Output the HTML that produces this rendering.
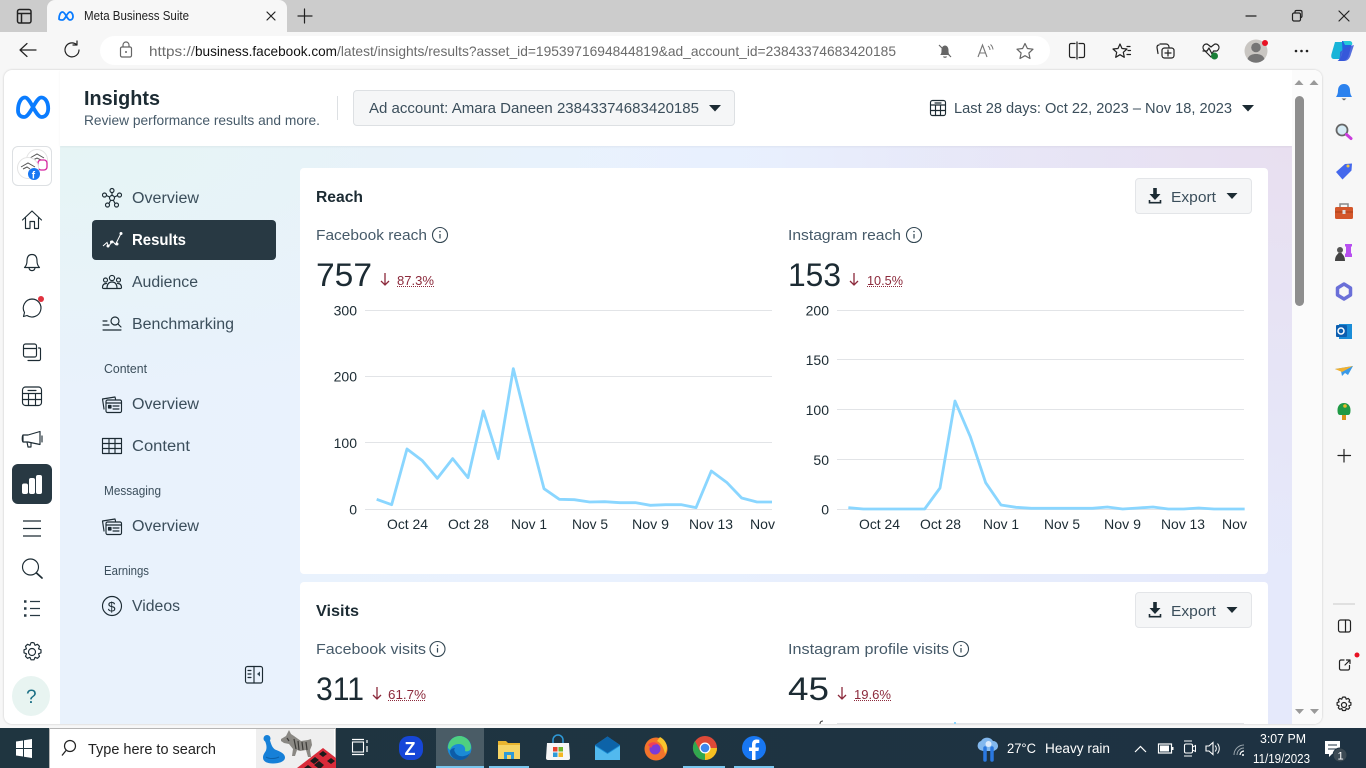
<!DOCTYPE html>
<html lang="en"><head><meta charset="utf-8"><title>Meta Business Suite</title>
<style>
html,body{margin:0;padding:0;width:1366px;height:768px;overflow:hidden;background:#f7f7f7;font-family:"Liberation Sans",sans-serif}
.a{position:absolute}
svg{position:absolute;left:0;top:0}
text{font-family:"Liberation Sans",sans-serif}
.n{font-size:15.5px;fill:#3b4e5b}
.s{font-size:12.5px;fill:#3b4e5b}
.ax{font-size:14px;fill:#1c2b33}
.bg{font-size:32px;fill:#1c2b33}
.pc{font-size:13px;fill:#8c2a3c}
.m{font-size:15px;fill:#465a69}
.h{font-size:15.5px;font-weight:bold;fill:#1c2b33}
.ic{fill:none;stroke:#1c2b33;stroke-width:1.15;stroke-linecap:round;stroke-linejoin:round}
.ib{fill:none;stroke:#222;stroke-width:1.2;stroke-linecap:round;stroke-linejoin:round}
.gr{stroke:#e2e4e7;stroke-width:1}
.ln{fill:none;stroke:#8ad6ff;stroke-linejoin:round}
.dot{stroke:#8c2a3c;stroke-width:1;stroke-dasharray:1 1}
.ar{fill:none;stroke:#8c2a3c;stroke-width:1.3}
</style></head><body>
<div class="a" style="left:0;top:0;width:1366px;height:32px;background:#ccc"></div>
<div class="a" style="left:47px;top:0;width:240px;height:32px;background:#f7f7f7;border-radius:8px 8px 0 0"></div>
<div class="a" style="left:100px;top:36px;width:950px;height:29px;background:#fff;border-radius:15px"></div>
<div class="a" style="left:4px;top:70px;width:1318px;height:654px;background:#fff;border-radius:8px;box-shadow:0 0 2px rgba(0,0,0,.2);overflow:hidden">
  <div class="a" style="left:56px;top:76px;width:1232px;height:578px;background:radial-gradient(ellipse 520px 420px at 100% 0,#e8dff0 0%,rgba(232,223,240,0) 100%),radial-gradient(ellipse 620px 260px at 0 0,#e6f4f5 0%,rgba(230,244,245,0) 100%),linear-gradient(90deg,#e9f2fc 0%,#e9f1fe 45%,#e5e9fb 100%)"></div>
  <div class="a" style="left:56px;top:0;width:1232px;height:76px;background:#fff;box-shadow:0 1px 2px rgba(0,0,0,.05)"></div>
  <div class="a" style="left:1288px;top:0;width:30px;height:654px;background:#fbfbfb"></div>
  <div class="a" style="left:1291px;top:26px;width:9px;height:210px;background:#8e8e8e;border-radius:5px"></div>
  <div class="a" style="left:296px;top:98px;width:968px;height:406px;background:#fff;border-radius:4px"></div>
  <div class="a" style="left:296px;top:512px;width:968px;height:150px;background:#fff;border-radius:4px"></div>
  <div class="a" style="left:88px;top:150px;width:184px;height:40px;background:#283943;border-radius:4px"></div>
  <div class="a" style="left:349px;top:20px;width:380px;height:34px;background:#f5f6f7;border:1px solid #dde0e3;border-radius:4px"></div>
  <div class="a" style="left:1131px;top:108px;width:115px;height:34px;background:#f5f6f7;border:1px solid #e3e5e8;border-radius:4px"></div>
  <div class="a" style="left:1131px;top:522px;width:115px;height:34px;background:#f5f6f7;border:1px solid #e3e5e8;border-radius:4px"></div>
  <div class="a" style="left:8px;top:394px;width:40px;height:40px;background:#283943;border-radius:6px"></div>
  <div class="a" style="left:8px;top:76px;width:38px;height:38px;background:#fff;border:1px solid #dde0e3;border-radius:6px"></div>
  <div class="a" style="left:8px;top:606px;width:38px;height:40px;background:#e8f4f1;border-radius:50%"></div>
</div>
<div class="a" style="left:0;top:728px;width:1366px;height:40px;background:linear-gradient(90deg,#1f3540,#1e3242)"></div>
<div class="a" style="left:49px;top:728px;height:40px;background:#fff;border:1px solid #b5b5b5;border-bottom:0;box-sizing:border-box;width:287px"></div>
<div class="a" style="left:256px;top:729px;width:78px;height:39px;background:#efefef"></div>
<div class="a" style="left:436px;top:728px;width:48px;height:40px;background:#4a5c66"></div>
<svg width="1366" height="768" viewBox="0 0 1366 768">
<!-- tab strip -->
<rect x="17.500" y="9.500" width="13.500" height="13.500" rx="2" fill="none" stroke="#222" stroke-width="1.500"/><path d="M18 13.500h13M21.500 13.500v9" fill="none" stroke="#222" stroke-width="1.500"/>
<path d="M59 19c0-4 1.500-7 3.500-7 3 0 4.500 8 7.500 8 2 0 3-1.500 3-3.500 0-2.500-1.500-4.500-3-4.500-3 0-4.500 8-7.500 8-2.300 0-3.500-.5-3.500-1z" fill="none" stroke="#0a7cff" stroke-width="1.800"/>
<text x="84" y="20" font-size="12.500" fill="#222" textLength="105" lengthAdjust="spacingAndGlyphs">Meta Business Suite</text>
<path d="M267 12l8 8M275 12l-8 8" class="ib"/>
<path d="M304.500 9v14M298 16h14" class="ib"/>
<path d="M1246 16h10" class="ib"/>
<rect x="1292.500" y="13" width="8" height="8" rx="1.500" class="ib"/><path d="M1295 13v-1c0-1 .5-1.500 1.500-1.500h4c1 0 1.500.5 1.500 1.500v4c0 1-.5 1.500-1.500 1.500" class="ib"/>
<path d="M1339 11l10 10M1349 11l-10 10" class="ib"/>
<!-- toolbar -->
<path d="M20 50h16M27 43.500L20 50l7 6.500" class="ib"/>
<path d="M79 50a7 7 0 1 1-2.500-5.500M77 41v4h-4" class="ib"/>
<rect x="120.500" y="47" width="11" height="10" rx="1.500" fill="none" stroke="#666" stroke-width="1.200"/><path d="M123 47v-2a3 3 0 0 1 6 0v2" fill="none" stroke="#666" stroke-width="1.200"/><circle cx="126" cy="52" r="1" fill="#666"/>
<text x="149" y="56" font-size="14" fill="#6b6b6b" textLength="46" lengthAdjust="spacingAndGlyphs">https://</text>
<text x="195" y="56" font-size="14" fill="#111" textLength="142" lengthAdjust="spacingAndGlyphs">business.facebook.com</text>
<text x="337" y="56" font-size="14" fill="#6b6b6b" textLength="559" lengthAdjust="spacingAndGlyphs">/latest/insights/results?asset_id=1953971694844819&amp;ad_account_id=23843374683420185</text>
<path d="M940 55c1.500-1 1.500-3 1.500-5 0-2.500 1.500-4.500 3.500-4.500s3.500 2 3.500 4.500c0 2 0 4 1.500 5z" fill="#666"/><path d="M943.500 56.500a1.800 1.800 0 0 0 3 0M939 45l12 12" stroke="#666" stroke-width="1.200" fill="none"/>
<path d="M978 57l4.500-12 4.500 12M979.500 53h6" fill="none" stroke="#777" stroke-width="1.100"/><path d="M988 46a5 5 0 0 1 2 4M990.500 44.500a8 8 0 0 1 2.500 5" fill="none" stroke="#777" stroke-width="1"/>
<path d="M1025 43.500l2.400 5 5.600.7-4.100 3.800 1.100 5.500-5-2.800-5 2.800 1.100-5.500-4.100-3.800 5.600-.7z" fill="none" stroke="#666" stroke-width="1.200" stroke-linejoin="round"/>
<path d="M1075 44h-4a1.500 1.500 0 0 0-1.500 1.500v11a1.500 1.500 0 0 0 1.500 1.500h4M1079 44h4a1.500 1.500 0 0 1 1.500 1.500v11a1.500 1.500 0 0 1-1.500 1.500h-4M1077 42.500v17" class="ib" transform="translate(0 -.5)"/>
<path d="M1120 44l2 4.500 5 .5-3.700 3.300 1 5-4.300-2.600-4.300 2.600 1-5L1113 49l5-.5zM1127 46.500h3M1128 50.500h2.500M1127 54.500h3.500" class="ib"/>
<path d="M1160 44h6a3 3 0 0 1 3 3M1159 45c-1.500 0-2 1-2 2.500l1 6" class="ib"/><rect x="1162" y="48" width="12" height="10" rx="2.500" class="ib"/><path d="M1168 50v6M1165 53h6" class="ib"/>
<path d="M1211 57l-7-7c-3-3.500 1.500-8 4.500-5l2.500 2 2.500-2c3-3 7.500 1.500 4.500 5l-1 1" class="ib"/><path d="M1203 51h4l2-3 3 6 1.500-3h3" class="ib"/><circle cx="1214.500" cy="56" r="3.500" fill="#1a7f37"/>
<circle cx="1256" cy="51" r="11.500" fill="#c9c6c2"/><circle cx="1256" cy="47.500" r="4.800" fill="#757575"/><path d="M1247.500 59c1.500-4 5-5 8.500-5s7 1 8.500 5a11.500 11.500 0 0 1-17 0z" fill="#757575"/><circle cx="1265" cy="43" r="3" fill="#e81123"/>
<circle cx="1296" cy="51" r="1.300" fill="#222"/><circle cx="1301.500" cy="51" r="1.300" fill="#222"/><circle cx="1307" cy="51" r="1.300" fill="#222"/>
<path d="M1335 42h10l-5 17h-6c-3 0-3-3-2.500-5z" fill="#18b4d8"/><path d="M1342 41h7c3 0 3 2 2.500 4l-3 11c-1 3-3 5-6 5h-5c3-2 4-5 5-9z" fill="#2463e0"/><path d="M1340 52l7-5 7-2-3 9c-1 4-3 7-7 7h-6c2-2 2-5 2-9z" fill="#3a56d8" opacity=".85"/><path d="M1343 41h6c2 0 4 1 3 4h-7z" fill="#26c9d9"/>
<!-- header -->
<path d="M18 110.500c0-7.500 3-13 7-13 5.500 0 10.500 19.500 16.500 19.500 3.800 0 6.700-3 6.700-8.500 0-6.500-3-11-7-11-5.500 0-11 19.500-17 19.500-3.700 0-6.200-2.500-6.200-6.500z" fill="none" stroke="#0a7cff" stroke-width="3.800"/>
<text x="84" y="105" font-size="20" font-weight="bold" fill="#1c2b33" textLength="76" lengthAdjust="spacingAndGlyphs">Insights</text>
<text x="84" y="125" font-size="14" fill="#465a69" textLength="236" lengthAdjust="spacingAndGlyphs">Review performance results and more.</text>
<path d="M337.500 96v24" stroke="#dde0e3"/>
<text x="369" y="113" font-size="15" fill="#3b4e5b" textLength="330" lengthAdjust="spacingAndGlyphs">Ad account: Amara Daneen 23843374683420185</text>
<path d="M709 105h12l-6 6.500z" fill="#1c2b33"/>
<rect x="930.500" y="100.500" width="15" height="15" rx="2" class="ic"/><path d="M930.500 105h15M930.500 110.500h15M935.500 105v10.500M940.500 105v10.500M935 103h6" class="ic"/>
<text x="954" y="113" font-size="15" fill="#3b4e5b" textLength="278" lengthAdjust="spacingAndGlyphs">Last 28 days: Oct 22, 2023 – Nov 18, 2023</text>
<path d="M1242 105h12l-6 6.500z" fill="#1c2b33"/>
<!-- scroll arrows -->
<path d="M1294.500 85l4.500-5 4.500 5zM1309.500 85l4.500-5 4.500 5z" fill="#9a9a9a"/>
<path d="M1295 709l4.500 5 4.500-5zM1310 709l4.500 5 4.500-5z" fill="#9a9a9a"/>
<!-- left rail -->
<circle cx="37" cy="160" r="10.500" fill="#fff" stroke="#e4e4e4"/><path d="M30 158l7-4 7 4M33 160l4-2 4 2" fill="none" stroke="#555" stroke-width="1"/>
<rect x="38" y="160" width="9" height="10" rx="3" fill="#fff" stroke="#d6249f" stroke-width="1.300"/>
<circle cx="28" cy="168" r="10.500" fill="#fff" stroke="#e4e4e4"/><path d="M21 167l7-4 7 4M23 169l4-2 3 2" fill="none" stroke="#555" stroke-width="1"/>
<circle cx="34" cy="174" r="6" fill="#1877f2"/><text x="31.800" y="178.500" font-size="10" font-weight="bold" fill="#fff">f</text>
<path d="M22.500 220l9.500-9 9.500 9M25.500 218v10.500h4.500v-7h4.500v7H38.500V218" class="ic"/>
<path d="M32 254.500c-3.700 0-5 3-5 6.500 0 3-1 5-2.500 6.500h15c-1.500-1.500-2.500-3.500-2.500-6.500 0-3.500-1.300-6.500-5-6.500zM29 268c.7 3.500 5.300 3.500 6 0" class="ic"/>
<path d="M32 299a9 9 0 1 1-5 16.500l-3.500 1 1-4A9 9 0 0 1 32 299z" class="ic"/><circle cx="41" cy="299" r="3" fill="#e0323f"/>
<rect x="23.500" y="344" width="13" height="13" rx="2" class="ic"/><path d="M23.500 348.500h13" class="ic"/><path d="M38.500 348h1a1 1 0 0 1 1 1v10a1.500 1.500 0 0 1-1.500 1.500H28" class="ic"/>
<rect x="22.500" y="387" width="19" height="18.500" rx="3" class="ic"/><path d="M22.500 393.500h19M22.500 399.500h19M28.500 393.500v12M35.500 393.500v12M28 390.500h8" class="ic"/>
<path d="M23 435h5l12-3.500v13L28 442h-5zM23 435c-1 1-1 6 0 7M27 442l1 5h3v-4M42 436v6" class="ic"/>
<rect x="22" y="483.500" width="6" height="10.500" rx="2" fill="#fff"/><rect x="29" y="478" width="6" height="16" rx="2" fill="#fff"/><rect x="36" y="475" width="6" height="19" rx="2" fill="#fff"/>
<path d="M23 521h18M23 528.500h18M23 536h18" stroke="#1c2b33" stroke-width="1.200"/>
<circle cx="30.500" cy="567" r="8" class="ic"/><path d="M36.500 573l5.500 5" stroke="#1c2b33" stroke-width="1.700" stroke-linecap="round"/>
<path d="M24 601.500h2.500M24 608.500h2.500M24 615.500h2.500" stroke="#283943" stroke-width="2.600"/><path d="M30 601.500h10M30 608.500h10M30 615.500h10" stroke="#283943" stroke-width="1.200"/>
<path d="M32 642.500l2 .3 1 2.500 2.500-1 2 2-1 2.500 2.500 1v3l-2.500 1 1 2.500-2 2-2.500-1-1 2.500h-3l-1-2.500-2.500 1-2-2 1-2.500-2.500-1v-3l2.500-1-1-2.500 2-2 2.500 1 1-2.500z" class="ic"/><circle cx="32" cy="652" r="3.500" class="ic"/>
<text x="26" y="703" font-size="19" fill="#1b6f85">?</text>
<!-- nav -->
<g class="ic"><circle cx="112" cy="198" r="2.500"/><circle cx="112" cy="190.500" r="2"/><circle cx="104.500" cy="195" r="2"/><circle cx="119.500" cy="195" r="2"/><circle cx="107.500" cy="205" r="2"/><circle cx="116.500" cy="205" r="2"/><path d="M112 192.500v3M106.500 195.500l3 1.500M117.500 195.500l-3 1.500M109 203.500l1.500-3M115 203.500l-1.500-3"/></g>
<text x="132" y="203" class="n" textLength="67" lengthAdjust="spacingAndGlyphs">Overview</text>
<path d="M103 246l4-3.500 1.500 4 4-5.500 3 3.500 3-6 2.500-5" fill="none" stroke="#fff" stroke-width="1"/><g fill="#fff"><circle cx="108" cy="246" r="1.500"/><circle cx="111.500" cy="242" r="1.500"/><circle cx="117" cy="244" r="1.500"/><circle cx="121" cy="233.500" r="1.500"/></g>
<text x="132" y="245" font-size="15.500" font-weight="bold" fill="#fff" textLength="54" lengthAdjust="spacingAndGlyphs">Results</text>
<g class="ic"><circle cx="112" cy="278" r="2.600"/><circle cx="105.500" cy="280" r="2"/><circle cx="118.500" cy="280" r="2"/><path d="M107 288.500c0-5 2-6.500 5-6.500s5 1.500 5 6.500zM106.500 283.500c-2.500 0-4 1.500-4 4 0 1 .5 1 1.500 1h3M117.500 283.500c2.500 0 4 1.500 4 4 0 1-.5 1-1.500 1h-3"/></g>
<text x="132" y="287" class="n" textLength="66" lengthAdjust="spacingAndGlyphs">Audience</text>
<g class="ic"><circle cx="115" cy="321" r="4"/><path d="M118 324l3 3M103 321h4M103 325h6M103 330h18"/></g>
<text x="132" y="329" class="n" textLength="102" lengthAdjust="spacingAndGlyphs">Benchmarking</text>
<text x="104" y="373" class="s" textLength="43" lengthAdjust="spacingAndGlyphs">Content</text>
<g id="ci" class="ic"><path d="M104 409l-1.500-10 12.500-2 .5 2"/><rect x="106" y="400" width="15.500" height="12.500" rx="1.500"/><path d="M106 403h15.500M113 406h6M113 409h6"/><rect x="108.500" y="405.500" width="2.500" height="2.500" fill="#1c2b33"/></g>
<text x="132" y="409" class="n" textLength="67" lengthAdjust="spacingAndGlyphs">Overview</text>
<path d="M102.500 438.500h19v15h-19zM102.500 443.500h19M102.500 448.500h19M109 438.500v15M115 438.500v15" class="ic"/>
<text x="132" y="451" class="n" textLength="58" lengthAdjust="spacingAndGlyphs">Content</text>
<text x="104" y="495" class="s" textLength="57" lengthAdjust="spacingAndGlyphs">Messaging</text>
<use href="#ci" transform="translate(0 122)"/>
<text x="132" y="531" class="n" textLength="67" lengthAdjust="spacingAndGlyphs">Overview</text>
<text x="104" y="575" class="s" textLength="45" lengthAdjust="spacingAndGlyphs">Earnings</text>
<circle cx="112" cy="606" r="9.500" class="ic"/><text x="107.800" y="611.500" font-size="14" fill="#1c2b33">$</text>
<text x="132" y="611" class="n" textLength="48" lengthAdjust="spacingAndGlyphs">Videos</text>
<rect x="245.500" y="666.500" width="17" height="16.500" rx="2" class="ic"/><path d="M254 666.500V683M248 670.500h3M248 674h3M248 677.500h3" class="ic"/><path d="M260 671.500v5l-3-2.500z" fill="#344854"/>
<!-- Reach card -->
<text x="316" y="202" class="h" textLength="47" lengthAdjust="spacingAndGlyphs">Reach</text>
<text x="316" y="240" class="m" textLength="111" lengthAdjust="spacingAndGlyphs">Facebook reach</text>
<g id="inf"><circle cx="440" cy="235" r="7.500" fill="none" stroke="#344854" stroke-width="1.100"/><path d="M440 234v4.500" stroke="#344854" stroke-width="1.200"/><circle cx="440" cy="231.500" r=".8" fill="#344854"/></g>
<text x="316" y="286" class="bg" textLength="56" lengthAdjust="spacingAndGlyphs">757</text>
<path d="M385 273v12M381 281l4 4 4-4" class="ar"/>
<text x="397" y="285" class="pc" textLength="37" lengthAdjust="spacingAndGlyphs">87.3%</text><path d="M397 286.500h37" class="dot"/>
<text x="788" y="240" class="m" textLength="113" lengthAdjust="spacingAndGlyphs">Instagram reach</text>
<use href="#inf" x="474"/>
<text x="788" y="286" class="bg" textLength="53" lengthAdjust="spacingAndGlyphs">153</text>
<path d="M854 273v12M850 281l4 4 4-4" class="ar"/>
<text x="867" y="285" class="pc" textLength="36" lengthAdjust="spacingAndGlyphs">10.5%</text><path d="M867 286.500h36" class="dot"/>
<g id="exp"><path d="M1153.200 188h3.600v6h3.700l-5.500 6-5.500-6h3.700z" fill="#1c2b33"/><path d="M1149.500 200v2.700h11V200" fill="none" stroke="#1c2b33" stroke-width="1.600"/>
<text x="1171" y="202" font-size="15" fill="#3b4e5b" textLength="45" lengthAdjust="spacingAndGlyphs">Export</text>
<path d="M1226.500 193h11l-5.500 6z" fill="#1c2b33"/></g>
<path d="M365 310.500h407M365 376.500h407M365 442.500h407" class="gr"/><path d="M365 509.500h407" class="gr" stroke-width="1.500"/>
<g class="ax" text-anchor="end"><text x="357" y="315.500">300</text><text x="357" y="381.500">200</text><text x="357" y="448">100</text><text x="357" y="514.500">0</text></g>
<polyline class="ln" transform="translate(300 170) scale(.33333)" style="stroke-width:8.500" points="230,988 275,1004 321,837 367,872 412,925 458,866 504,923 550,723 595,866 640,596 686,780 732,956 778,988 823,989 869,996 914,995 960,998 1006,998 1051,1006 1097,1004 1143,1004 1188,1013 1234,903 1280,937 1325,984 1371,996 1416,996"/>
<g class="ax"><text x="387" y="529" textLength="41" lengthAdjust="spacingAndGlyphs">Oct 24</text><text x="448" y="529" textLength="41" lengthAdjust="spacingAndGlyphs">Oct 28</text><text x="511" y="529" textLength="36" lengthAdjust="spacingAndGlyphs">Nov 1</text><text x="572" y="529" textLength="36" lengthAdjust="spacingAndGlyphs">Nov 5</text><text x="632" y="529" textLength="37" lengthAdjust="spacingAndGlyphs">Nov 9</text><text x="689" y="529" textLength="44" lengthAdjust="spacingAndGlyphs">Nov 13</text><text x="750" y="529" textLength="25" lengthAdjust="spacingAndGlyphs">Nov</text></g>
<path d="M837 310.500h407M837 359.500h407M837 409.500h407M837 459.500h407" class="gr"/><path d="M837 509.500h407" class="gr" stroke-width="1.500"/>
<g class="ax" text-anchor="end"><text x="829" y="315.500">200</text><text x="829" y="365">150</text><text x="829" y="415">100</text><text x="829" y="465">50</text><text x="829" y="514.500">0</text></g>
<polyline class="ln" transform="translate(780 170) scale(.33333)" style="stroke-width:8.500" points="205,1013 250,1017 296,1017 342,1017 388,1017 434,1017 480,954 525,693 571,800 617,938 663,1005 708,1012 754,1015 800,1015 845,1015 891,1015 937,1015 982,1011 1028,1017 1074,1014 1119,1011 1165,1017 1211,1017 1256,1014 1302,1017 1348,1017 1394,1017"/>
<g class="ax"><text x="859" y="529" textLength="41" lengthAdjust="spacingAndGlyphs">Oct 24</text><text x="920" y="529" textLength="41" lengthAdjust="spacingAndGlyphs">Oct 28</text><text x="983" y="529" textLength="36" lengthAdjust="spacingAndGlyphs">Nov 1</text><text x="1044" y="529" textLength="36" lengthAdjust="spacingAndGlyphs">Nov 5</text><text x="1104" y="529" textLength="37" lengthAdjust="spacingAndGlyphs">Nov 9</text><text x="1161" y="529" textLength="44" lengthAdjust="spacingAndGlyphs">Nov 13</text><text x="1222" y="529" textLength="25" lengthAdjust="spacingAndGlyphs">Nov</text></g>
<!-- Visits card -->
<text x="316" y="616" class="h" textLength="43" lengthAdjust="spacingAndGlyphs">Visits</text>
<use href="#exp" y="414"/>
<text x="316" y="654" class="m" textLength="110" lengthAdjust="spacingAndGlyphs">Facebook visits</text>
<use href="#inf" x="-2.500" y="414"/>
<text x="316" y="700" class="bg" textLength="48" lengthAdjust="spacingAndGlyphs">311</text>
<path d="M377 687v12M373 695l4 4 4-4" class="ar"/>
<text x="388" y="699" class="pc" textLength="38" lengthAdjust="spacingAndGlyphs">61.7%</text><path d="M388 700.500h38" class="dot"/>
<text x="788" y="654" class="m" textLength="161" lengthAdjust="spacingAndGlyphs">Instagram profile visits</text>
<use href="#inf" x="521" y="414"/>
<text x="788" y="700" class="bg" textLength="41" lengthAdjust="spacingAndGlyphs">45</text>
<path d="M842 687v12M838 695l4 4 4-4" class="ar"/>
<text x="854" y="699" class="pc" textLength="37" lengthAdjust="spacingAndGlyphs">19.6%</text><path d="M854 700.500h37" class="dot"/>
<path d="M837 723.500h407" class="gr"/><path d="M955 722v2" stroke="#8ad6ff" stroke-width="2"/><path d="M820 724c0-2 1-3 3-3" stroke="#333" fill="none"/>
<!-- right sidebar -->
<path d="M1344 84c-4 0-6 3-6 6.500 0 3-1 5-2 6.500h16c-1-1.500-2-3.500-2-6.500 0-3.500-2-6.500-6-6.500z" fill="#2c82ee"/><path d="M1341.500 98.500h5l-2.500 2z" fill="#666"/>
<circle cx="1342" cy="130" r="5.500" fill="#d6ebf5" stroke="#666" stroke-width="1.800"/><path d="M1346.500 134.500l4.500 4" stroke="#c93cdc" stroke-width="3" stroke-linecap="round"/>
<path d="M1336 172l9-8 7-.5-.5 7-9 9z" fill="#4468ec"/><circle cx="1348" cy="166" r="1.500" fill="#f2c744"/>
<rect x="1335" y="207" width="18" height="12" rx="1.500" fill="#d3562a"/><path d="M1340 207v-3h8v3" fill="none" stroke="#888" stroke-width="1.500"/><path d="M1335 212h18" stroke="#a83e18"/><rect x="1342.500" y="210" width="3" height="4" fill="#ddd"/>
<path d="M1345 244h7v2l-1 1v6l1 1v3h-7v-3l1-1v-6l-1-1z" fill="#b84ff0"/><circle cx="1340" cy="250" r="3" fill="#555"/><path d="M1335 261c0-5 2-6 3.500-8h3c1.500 2 3.500 3 3.500 8z" fill="#444"/>
<path d="M1344 284l6.500 4v7l-6.500 4-6.500-4v-7z" fill="none" stroke="#6a6fd8" stroke-width="3.500" stroke-linejoin="round"/>
<rect x="1339" y="324" width="13" height="15" fill="#1a8dd8"/><rect x="1336" y="325" width="11" height="12" rx="1" fill="#0d5fb0"/><circle cx="1341" cy="331" r="3" fill="none" stroke="#fff" stroke-width="1.500"/>
<path d="M1335 369l18-3-5 9-3-2-3 3-1-5z" fill="#3a9ae8"/><path d="M1335 369l7 3 11-6z" fill="#f0b030"/>
<path d="M1344 403c-4 0-6.500 3-6.500 7 0 3 .5 5 2.500 5h8c2 0 2.500-2 2.500-5 0-4-2.500-7-6.500-7z" fill="#1f9a45"/><rect x="1342" y="415" width="4" height="5" fill="#d9941c"/><circle cx="1345" cy="406" r="1.800" fill="#e8b92b"/>
<path d="M1338 455.500h12.500M1344 449.500v12.500" class="ib"/>
<path d="M1333 604h22" stroke="#c8c8c8"/>
<rect x="1338.500" y="620" width="12" height="12" rx="2" class="ib"/><path d="M1345.500 620v12" class="ib"/>
<path d="M1344 660h-3a1.500 1.500 0 0 0-1.500 1.500v7a1.500 1.500 0 0 0 1.500 1.500h7a1.500 1.500 0 0 0 1.500-1.500v-3M1345 665l5-5M1346.500 660h3.500v3.500" class="ib"/><circle cx="1357" cy="655" r="2.500" fill="#e81123"/>
<path d="M1344 697l1.500.2.700 2 2-.8 1.500 1.500-.8 2 2 .7v2.500l-2 .7.8 2-1.500 1.500-2-.8-.7 2h-3l-.7-2-2 .8-1.500-1.500.8-2-2-.7v-2.500l2-.7-.8-2 1.500-1.500 2 .8.700-2z" class="ib"/><circle cx="1344" cy="705" r="2.500" class="ib"/>
<!-- taskbar -->
<path d="M16 741.500l7-1v7.500h-7zM24 740.300l8-1.300v9h-8zM16 749h7v7.500l-7-1zM24 749h8v9l-8-1.300z" fill="#fff"/>
<circle cx="70" cy="746" r="5.500" fill="none" stroke="#222" stroke-width="1.200"/><path d="M66 750.500l-4 5" stroke="#222" stroke-width="1.300"/>
<text x="88" y="754" font-size="14.500" fill="#222" textLength="128" lengthAdjust="spacingAndGlyphs">Type here to search</text>
<circle cx="267" cy="738.500" r="3.500" fill="#1680d8"/><path d="M265 741l5-.5c1 3 2 7 5 9 5 2 10 4 10 8 0 4-6 6-12 6-6 0-10-2-10-6 0-3 2-5 3-7 1-3 .5-6-1-9.500z" fill="#1680d8"/><path d="M266 757c3 2 9 2 13 0" stroke="#0d60a8" fill="none"/>
<path d="M281 739l5-3 3-6 2 4 3 2 7 5 7-1 3-1 1 6-2 5 1 7h-3l-2-7-6 1-3-1-2 6h-3l1-7-4-5-5-1-3-2z" fill="#8a8883"/><path d="M294 739l2 10M298 741l1 9M302 742l1 8M306 742l1 8M287 738l2 3" stroke="#3c3b38" stroke-width="1.200" fill="none"/>
<path d="M297 768l26-20 13 10v10z" fill="#d92b3a"/><path d="M310 761l5-4 4 3-5 4zM319 754l4-3 4 3-4 3zM304 768l4-3 4 3zM318 768l-4-3 5-4 5 4-3 3zM327 761l4-3 4 3-4 3z" fill="#1b1b1b"/>
<rect x="352.500" y="742" width="11" height="10" fill="none" stroke="#fff" stroke-width="1.100"/><path d="M352 739.500h12M352 754.500h12M367 740v3M367 746v6" stroke="#fff" stroke-width="1.200"/>
<rect x="399" y="736" width="24" height="24" rx="10" fill="#1646d8"/><text x="404.500" y="755" font-size="18" font-weight="bold" fill="#fff">Z</text>
<circle cx="459.500" cy="748" r="12" fill="#1b8ad6"/><path d="M448 748a11.500 11.500 0 0 1 23-1c0 4-4 5-6 4 1-4-2-7-6-7-5 0-8 3-9 6z" fill="#4fd080"/><path d="M455 752c1 3 5 5 9 4 2-.5 4-1 6-3-2 5-6 7-10 7-6 0-10-4-10-9 1-2 3-3 5-3-1 1-1 3 0 4z" fill="#0d5ca8"/>
<path d="M436 766h48v2h-48zM489 766h40v2h-40zM683 766h42v2h-42zM734 766h40v2h-40z" fill="#79c6ee"/>
<path d="M498 741h8l2 2h12v16h-22z" fill="#e9b52f"/><rect x="498" y="745" width="22" height="14" fill="#f6d566"/><rect x="504" y="752" width="10" height="7" fill="#2e9ad8"/><rect x="507" y="755" width="4" height="4" fill="#f6d566"/>
<path d="M547 743h22l1 15a2 2 0 0 1-2 2h-20a2 2 0 0 1-2-2z" fill="#f6f6f6"/><path d="M553 743v-3a5 5 0 0 1 10 0v3" fill="none" stroke="#2e9ad8" stroke-width="1.500"/><rect x="553" y="747" width="4.500" height="4.500" fill="#e8432e"/><rect x="558.500" y="747" width="4.500" height="4.500" fill="#6fb62c"/><rect x="553" y="752.500" width="4.500" height="4.500" fill="#2e9ad8"/><rect x="558.500" y="752.500" width="4.500" height="4.500" fill="#f3b722"/>
<path d="M595 745l12.500-8.500L620 745v15h-25z" fill="#1b8fd8"/><path d="M595 746l12.500 8 12.500-8v14h-25z" fill="#52b9ee"/><path d="M595 745l12.500-8.500L620 745l-12.500 8z" fill="#0d63a8"/>
<circle cx="656" cy="749" r="11.500" fill="#f3732b"/><path d="M660 737c4 2 7 6 7 11 0 2-1 4-2 6-1-6-4-11-8-13 1-1 2-3 3-4z" fill="#f8c42d"/><circle cx="655" cy="749" r="5.500" fill="#7a3bd8"/><path d="M648 745c2-3 7-4 10-1l-5 1-2 3z" fill="#ef3e5a"/>
<circle cx="705" cy="748" r="12" fill="#de4a38"/><path d="M705 748l-10.400 6A12 12 0 0 0 705 760z" fill="#2fa84f"/><path d="M705 748h12a12 12 0 0 1-12 12z" fill="#f6c021"/><path d="M695 741l5 10-5.400 3a12 12 0 0 1 .4-13z" fill="#2fa84f"/><circle cx="705" cy="748" r="5.500" fill="#fff"/><circle cx="705" cy="748" r="4.300" fill="#3f88ee"/>
<circle cx="754" cy="748" r="12" fill="#1877f2"/><path d="M755.500 760v-9h3l.5-3.500h-3.500V745c0-1.200.5-2 2-2h1.800v-3.200c-3.500-.7-7.300-.3-7.300 4.700v3h-3v3.500h3v9z" fill="#fff"/>
<path d="M980 750a5 5 0 0 1 1-9 7 7 0 0 1 12 0 5 5 0 0 1 4 8l-3 2H983z" fill="#82b8ee"/><path d="M985 748v12M992 748v12" stroke="#2a78e0" stroke-width="3.500" stroke-linecap="round"/><circle cx="988.500" cy="744" r="3" fill="#dbeafc"/>
<text x="1007" y="753" font-size="13.500" fill="#fff" textLength="29" lengthAdjust="spacingAndGlyphs">27°C</text>
<text x="1045" y="753" font-size="13.500" fill="#fff" textLength="65" lengthAdjust="spacingAndGlyphs">Heavy rain</text>
<path d="M1135 752l5.500-5.500 5.500 5.500" fill="none" stroke="#fff" stroke-width="1.200"/>
<rect x="1158.500" y="744" width="13" height="9" fill="none" stroke="#fff" stroke-width="1.200"/><rect x="1160" y="745.500" width="9" height="6" fill="#fff"/><rect x="1172" y="747" width="1.500" height="3" fill="#fff"/>
<rect x="1184.500" y="744" width="8" height="9" rx="1.500" fill="none" stroke="#fff" stroke-width="1.100"/><path d="M1192.500 747l3-1.500v6l-3-1.500M1184 741h8M1184 756h8" fill="none" stroke="#fff" stroke-width="1"/>
<path d="M1206 746h3l4-3.500v12l-4-3.500h-3z" fill="none" stroke="#fff" stroke-width="1.100"/><path d="M1215 745.500a4 4 0 0 1 0 6M1217.500 743.500a8 8 0 0 1 0 10" fill="none" stroke="#fff" stroke-width="1"/>
<path d="M1234 755a10 10 0 0 1 10-10M1237 755a7 7 0 0 1 7-7" fill="none" stroke="#9aa5ad" stroke-width="1"/><path d="M1240 755a4 4 0 0 1 4-4" fill="none" stroke="#fff" stroke-width="1.200"/><circle cx="1243" cy="755" r="1" fill="#fff"/>
<text x="1306" y="743" font-size="12.500" fill="#fff" text-anchor="end" textLength="46" lengthAdjust="spacingAndGlyphs">3:07 PM</text>
<text x="1253" y="763" font-size="12.500" fill="#fff" textLength="57" lengthAdjust="spacingAndGlyphs">11/19/2023</text>
<path d="M1325 741h15v13h-8l-3 3v-3h-4z" fill="#fff"/><path d="M1328 745h9M1328 749h9" stroke="#1e3240"/>
<circle cx="1340" cy="755" r="7" fill="#3c4a54" stroke="#1e3240"/><text x="1337.500" y="759.500" font-size="11" fill="#fff">1</text>
</svg>
</body></html>
